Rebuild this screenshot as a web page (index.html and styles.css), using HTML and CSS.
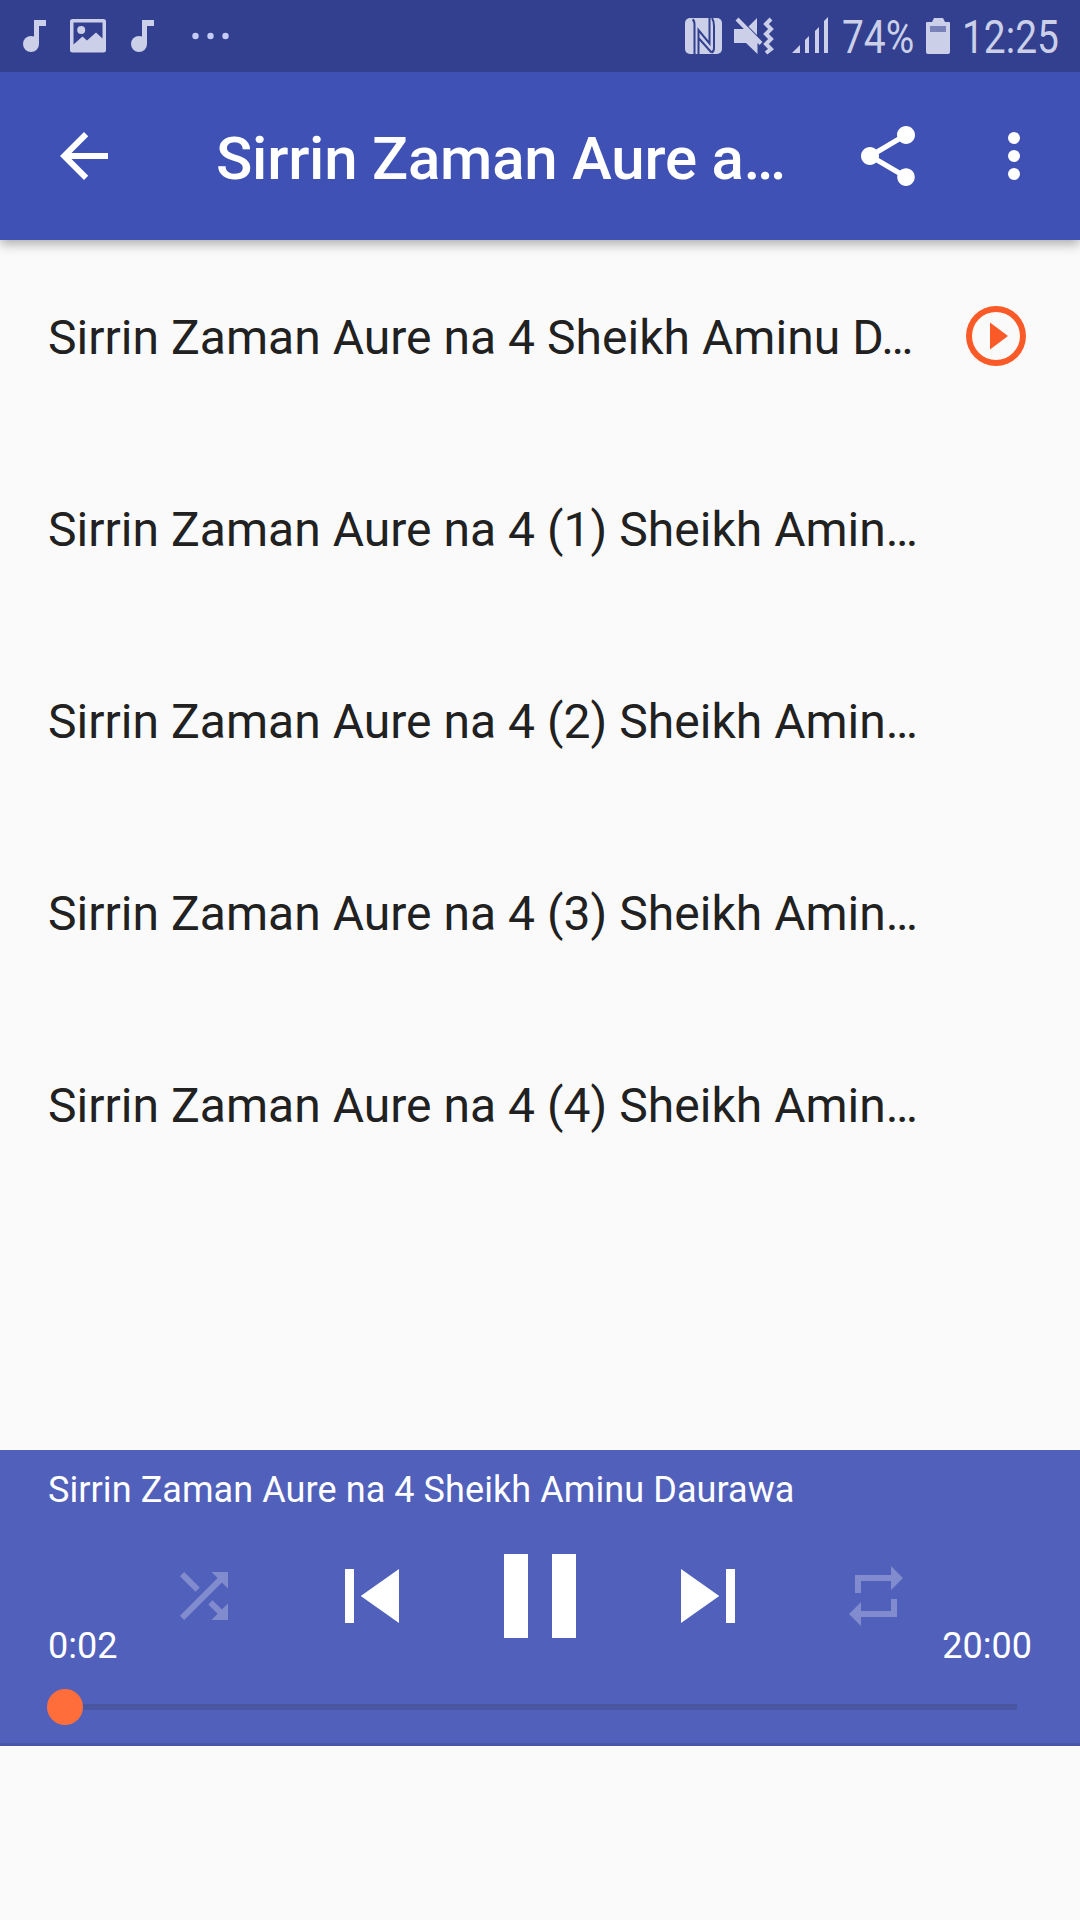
FILE: index.html
```html
<!DOCTYPE html>
<html lang="ha">
<head>
<meta charset="utf-8">
<title>Sirrin Zaman Aure</title>
<link rel="stylesheet" href="styles.css">
</head>
<body>
<div class="screen">
  <div class="status">
    <svg class="notifications" width="240" height="72" viewBox="0 0 240 72">
      <g id="note"><circle cx="31" cy="44" r="8"/><path d="M34 20h12v6h-7v18h-5z"/></g>
      <path fill-rule="evenodd" d="M72.500 19h31a2.500 2.500 0 0 1 2.500 2.500v28.500a2.500 2.500 0 0 1-2.500 2.500h-31a2.500 2.500 0 0 1-2.500-2.500v-28.500a2.500 2.500 0 0 1 2.500-2.500zM73.500 22.500v22l9-8 4.500 4 9-8 6.500 6v-16z"/>
      <circle cx="81.200" cy="30" r="4"/>
      <use href="#note" x="108"/>
      <g class="dots"><circle cx="195.500" cy="36" r="3.200"/><circle cx="210.500" cy="36" r="3.200"/><circle cx="225.500" cy="36" r="3.200"/></g>
    </svg>
    <div class="system">
      <svg width="150" height="72" viewBox="682 0 150 72">
        <rect x="685" y="18" width="37" height="36" rx="5"/>
        <path class="cut" d="M692.500 19.500q2 1 2 5V54M698.500 54V30l11 13.500V18M698.500 38l13 14.500M712 18q2 3 2 8V48q0 4-2.500 4.500"/>
        <path d="M734 29h10l13.500 13v12l-11.500-11h-12zM748.500 26.500l8.500-8.500v17zM735.500 20.500l3-3 24 24.500-3 3z"/>
        <path class="wave" d="M771 19l-5 5 5 5-5 5 5 5-5 5 5 5-5 4"/>
        <path d="M792 53h8v-8zM805 53h4v-17l-4 4zM815 53h4v-26l-4 4zM824 53h4v-36l-4 4z"/>
      </svg>
      <span class="percent"><span class="narrow">74%</span></span>
      <svg width="24" height="72" viewBox="0 0 24 72">
        <path d="M8 18h9l2 4h4a1 1 0 0 1 1 1v29a2 2 0 0 1-2 2H2a2 2 0 0 1-2-2V23a1 1 0 0 1 1-1h5z"/>
        <path class="used" d="M4 26h16v6H4z"/>
      </svg>
      <span class="clock"><span class="narrow">12:25</span></span>
    </div>
  </div>

  <header class="appbar">
    <svg class="icon" viewBox="0 0 24 24"><path d="M20 11H7.830l5.590-5.590L12 4l-8 8 8 8 1.410-1.410L7.830 13H20v-2z"/></svg>
    <h1 class="title">Sirrin Zaman Aure a…</h1>
    <svg class="icon" viewBox="0 0 24 24"><path d="M18 16.080c-.76 0-1.440.3-1.960.77L8.910 12.700c.05-.23.090-.46.090-.7s-.04-.47-.09-.7l7.050-4.110c.54.5 1.250.81 2.040.81 1.660 0 3-1.340 3-3s-1.340-3-3-3-3 1.340-3 3c0 .24.040.47.090.7L8.040 9.810C7.500 9.310 6.790 9 6 9c-1.660 0-3 1.340-3 3s1.340 3 3 3c.79 0 1.500-.31 2.040-.81l7.120 4.160c-.05.21-.08.43-.08.65 0 1.660 1.310 3 2.920 3s2.920-1.340 2.920-3-1.310-2.920-2.920-2.920z"/></svg>
    <svg class="icon more" viewBox="0 0 24 24"><circle cx="12" cy="6" r="2"/><circle cx="12" cy="12" r="2"/><circle cx="12" cy="18" r="2"/></svg>
  </header>

  <main class="tracks">
    <div class="track"><span>Sirrin Zaman Aure na 4 Sheikh Aminu D…</span>
      <svg class="playing" viewBox="0 0 24 24"><path d="M10 16.500l6-4.500-6-4.500v9zM12 2a10 10 0 1 0 0 20 10 10 0 0 0 0-20zm0 18a8 8 0 1 1 0-16 8 8 0 0 1 0 16z"/></svg>
    </div>
    <div class="track"><span>Sirrin Zaman Aure na 4 (1) Sheikh Amin…</span></div>
    <div class="track"><span>Sirrin Zaman Aure na 4 (2) Sheikh Amin…</span></div>
    <div class="track"><span>Sirrin Zaman Aure na 4 (3) Sheikh Amin…</span></div>
    <div class="track"><span>Sirrin Zaman Aure na 4 (4) Sheikh Amin…</span></div>
  </main>

  <section class="player">
    <div class="now">Sirrin Zaman Aure na 4 Sheikh Aminu Daurawa</div>
    <div class="controls">
      <svg class="small off" viewBox="0 0 24 24"><path d="M10.590 9.170L5.410 4 4 5.410l5.170 5.170 1.420-1.410zM14.500 4l2.040 2.040L4 18.590 5.410 20 17.960 7.460 20 9.500V4h-5.500zm.33 9.410l-1.410 1.410 3.130 3.130L14.500 20H20v-5.500l-2.040 2.040-3.130-3.130z"/></svg>
      <svg class="medium" viewBox="0 0 24 24"><path d="M6 6h2v12H6zm3.500 6l8.500 6V6z"/></svg>
      <svg class="large" viewBox="0 0 24 24"><path d="M6 19h4V5H6v14zm8-14v14h4V5h-4z"/></svg>
      <svg class="medium" viewBox="0 0 24 24"><path d="M6 18l8.500-6L6 6v12zM16 6v12h2V6h-2z"/></svg>
      <svg class="small off" viewBox="0 0 24 24"><path d="M7 7h10v3l4-4-4-4v3H5v6h2V7zm10 10H7v-3l-4 4 4 4v-3h12v-6h-2v4z"/></svg>
    </div>
    <div class="times"><span>0:02</span><span>20:00</span></div>
    <div class="seek"><div class="thumb"></div></div>
  </section>
</div>
</body>
</html>
```
FILE: styles.css
```css
* { box-sizing: border-box; }
body {
  margin: 0;
  background: #fafafa;
  font-family: Roboto, "Liberation Sans", sans-serif;
}
svg { display: block; flex: none; fill: currentColor; }
.screen {
  width: 1080px;
  height: 1920px;
  overflow: hidden;
  display: flex;
  flex-direction: column;
}

.status {
  position: relative;
  z-index: 1;
  height: 72px;
  flex: none;
  display: flex;
  justify-content: space-between;
  background: #32408f;
  color: #cbcfe7;
}
.status .dots { fill: #c5ccf8; }
.system { display: flex; width: 398px; }
.system .cut { fill: none; stroke: #32408f; stroke-width: 2; }
.system .wave { fill: none; stroke: currentColor; stroke-width: 4; }
.system .used { fill: #7882b8; }
.percent, .clock {
  font-size: 45.500px;
  line-height: 76px;
  white-space: nowrap;
}
.percent { width: 94px; padding-left: 10px; }
.clock { padding-left: 12px; }
.narrow { display: inline-block; transform: scaleX(.855); transform-origin: 0 50%; }

.appbar {
  position: relative;
  height: 168px;
  flex: none;
  display: flex;
  align-items: center;
  padding: 0 30px 0 48px;
  background: #3f51b5;
  color: #fff;
  box-shadow: 0 4px 11px rgba(0, 0, 0, .32);
}
.icon { width: 72px; height: 72px; }
.title {
  flex: 1;
  margin: 6px 0 0;
  padding-left: 96px;
  font-size: 60px;
  line-height: 70px;
  font-weight: 500;
  letter-spacing: -.23px;
  white-space: nowrap;
}
.more { margin-left: 54px; }

.tracks { height: 1210px; flex: none; }
.track {
  height: 192px;
  padding: 0 48px;
  display: flex;
  align-items: center;
  justify-content: space-between;
  font-size: 48px;
  line-height: 56px;
  letter-spacing: .03px;
  white-space: nowrap;
  color: #212121;
}
.track span { padding-top: 4px; }
.playing { width: 72px; height: 72px; color: #f95a27; }

.player {
  height: 296px;
  flex: none;
  display: flex;
  flex-direction: column;
  border-bottom: 3px solid #4857a8;
  background: #5161bb;
  color: #fff;
  font-size: 36px;
  line-height: 42px;
}
.now { padding: 19px 48px 0; height: 74px; letter-spacing: .08px; }
.controls {
  height: 144px;
  display: grid;
  grid-template-columns: repeat(5, 168px);
  justify-content: center;
  place-items: center;
}
.small { width: 72px; height: 72px; }
.medium { width: 108px; height: 108px; }
.large { width: 144px; height: 144px; }
.off { opacity: .27; }
.times {
  margin-top: -43px;
  padding: 0 48px;
  display: flex;
  justify-content: space-between;
}
.seek {
  height: 6px;
  margin: 37px 63px 0 65px;
  display: flex;
  align-items: center;
  background: #4957a2;
}
.thumb {
  width: 36px;
  height: 36px;
  flex: none;
  margin-left: -18px;
  border-radius: 50%;
  background: #ff6e3a;
}
```
